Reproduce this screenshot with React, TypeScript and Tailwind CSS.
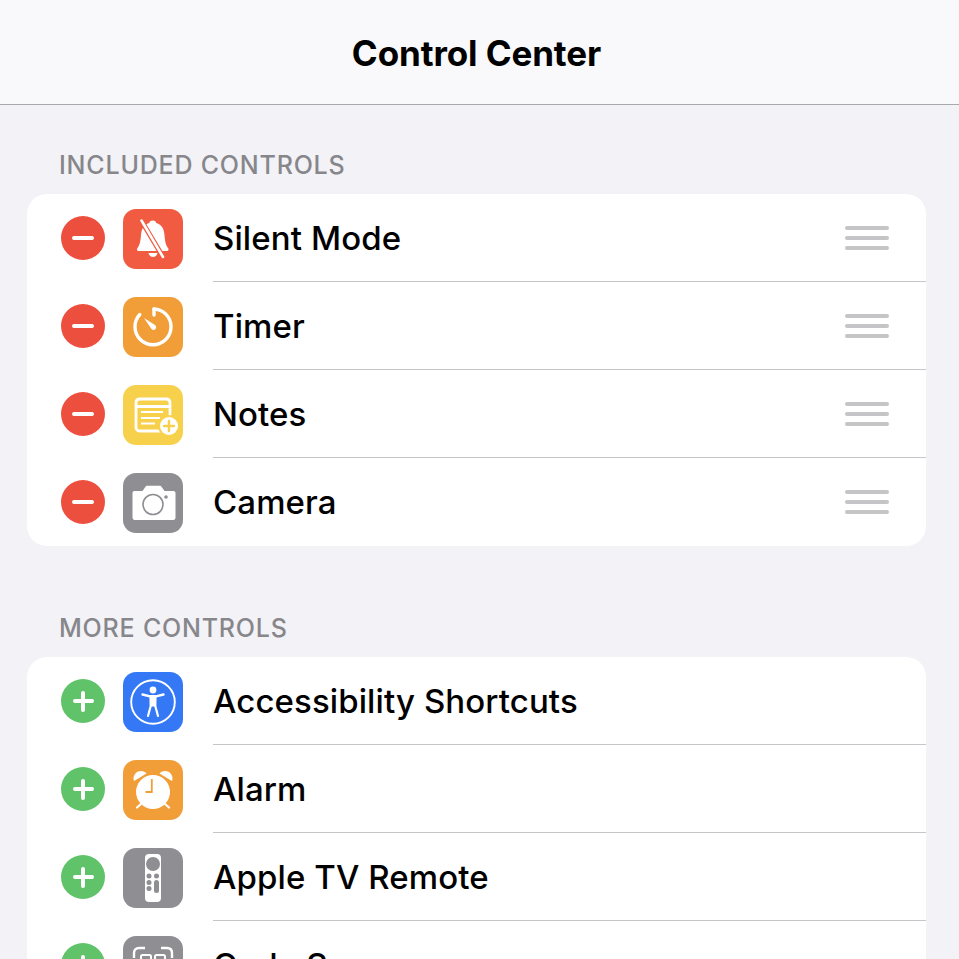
import type { ReactNode } from 'react';

const white = '#ffffff';

const BellIcon = () => (
  <svg viewBox="0 0 60 60" className="h-[60px] w-[60px]">
    <path d="M30 11.500c2 0 3 1 3.200 2.500c5.800 1.700 7.800 6.200 8.300 12c.5 6 1 9.500 3.500 13c1 1.500 .5 3-1 3H15.500c-1.500 0-2-1.500-1-3c2.500-3.500 3-7 3.500-13c.5-5.800 2.500-10.300 8.300-12c.2-1.500 1.200-2.500 3.700-2.500z" fill={white} />
    <path d="M25.500 44c.5 2.800 2.500 4 4.500 4s4-1.200 4.500-4z" fill={white} />
    <path d="M18 11l22 37" stroke="#f05b41" strokeWidth="5" />
    <path d="M18.500 11.500l21.500 36.500" stroke={white} strokeWidth="2.600" strokeLinecap="round" />
  </svg>
);

const TimerIcon = () => (
  <svg viewBox="0 0 60 60" className="h-[60px] w-[60px]" fill="none">
    <path d="M31 12c9.500 .4 17 8.200 17 17.700c0 10-8.100 18-18 18s-18-8-18-18c0-4.700 1.800-9 4.800-12.200" stroke={white} strokeWidth="3.400" strokeLinecap="round" />
    <path d="M31 12v6" stroke={white} strokeWidth="3.400" strokeLinecap="round" />
    <path d="M21 21l11 7c1.500 1.200 1.500 3 .3 4.200c-1.200 1.200-3 1-4-.5z" fill={white} />
  </svg>
);

const NotesIcon = () => (
  <svg viewBox="0 0 60 60" className="h-[60px] w-[60px]" fill="none">
    <path d="M38 46H17c-2.500 0-4-1.500-4-4V18c0-2.500 1.500-4 4-4h26c2.500 0 4 1.500 4 4v14" stroke={white} strokeWidth="2.800" />
    <path d="M13 21.500h34" stroke={white} strokeWidth="2.800" />
    <path d="M18 27h22M18 33h19M18 38.500h14" stroke={white} strokeWidth="2" />
    <circle cx="46" cy="41" r="11" fill="#f8d14c" />
    <circle cx="46" cy="41" r="9" fill={white} />
    <path d="M46 36v10M41 41h10" stroke="#f8d14c" strokeWidth="2.400" strokeLinecap="round" />
  </svg>
);

const CameraIcon = () => (
  <svg viewBox="0 0 60 60" className="h-[60px] w-[60px]">
    <path d="M10.500 18h9l3-4.200c.5-.7 1-1 2-1h12c1 0 1.500 .3 2 1l3 4.200h9c1.500 0 2 1 2 2v24.500c0 1.500-1 2.500-2 2.500h-39c-1 0-2-1-2-2.500V20c0-1 .5-2 2-2z" fill={white} />
    <circle cx="30" cy="31.500" r="10" fill="none" stroke="#8e8e93" strokeWidth="1.600" />
    <circle cx="43" cy="24" r="1.800" fill="#8e8e93" />
  </svg>
);

const AccessibilityIcon = () => (
  <svg viewBox="0 0 60 60" className="h-[60px] w-[60px]" fill="none">
    <circle cx="30" cy="30" r="21.800" stroke={white} strokeWidth="1.900" />
    <circle cx="30" cy="18" r="3.400" fill={white} />
    <path d="M19.500 22.500l7.500 1.800h6l7.500-1.800" stroke={white} strokeWidth="2.400" strokeLinecap="round" strokeLinejoin="round" />
    <path d="M27.500 24l.2 10l-2.700 10M32.500 24l-.2 10l2.700 10" stroke={white} strokeWidth="2.200" strokeLinecap="round" strokeLinejoin="round" />
    <path d="M27.500 24h5v10.500h-5z" fill={white} />
  </svg>
);

const AlarmIcon = () => (
  <svg viewBox="0 0 60 60" className="h-[60px] w-[60px]" fill="none">
    <circle cx="30" cy="32" r="17" fill={white} />
    <path d="M11 21c-2-5 2-10 7-10c2.500 0 4.500 1 5.500 2.500z" fill={white} />
    <path d="M49 21c2-5-2-10-7-10c-2.500 0-4.500 1-5.500 2.500z" fill={white} />
    <path d="M18 44l-4 3.500M42 44l4 3.500" stroke={white} strokeWidth="2.200" strokeLinecap="round" />
    <path d="M28.800 19v13h-6.300" stroke="#f19e38" strokeWidth="1.800" />
  </svg>
);

const RemoteIcon = () => (
  <svg viewBox="0 0 60 60" className="h-[60px] w-[60px]">
    <rect x="22" y="6" width="16" height="48" rx="4" fill={white} />
    <circle cx="30" cy="16" r="7" fill="#8e8e93" />
    <circle cx="26" cy="28" r="2.500" fill="#8e8e93" />
    <circle cx="33.500" cy="28" r="2.500" fill="#8e8e93" />
    <circle cx="26" cy="34.500" r="2.500" fill="#8e8e93" />
    <circle cx="26" cy="40.500" r="2.500" fill="#8e8e93" />
    <rect x="31" y="32" width="5" height="13" rx="2.500" fill="#8e8e93" />
  </svg>
);

const ScannerIcon = () => (
  <svg viewBox="0 0 60 60" className="h-[60px] w-[60px]" fill="none">
    <path d="M11 22v-5c0-3 2-5 5-5h6M38 12h6c3 0 5 2 5 5v5M11 38v5c0 3 2 5 5 5h6M38 48h6c3 0 5-2 5-5v-5" stroke={white} strokeWidth="2.400" />
    <rect x="18" y="19" width="10" height="9" rx="1.500" stroke={white} strokeWidth="2" />
    <rect x="32" y="19" width="10" height="9" rx="1.500" stroke={white} strokeWidth="2" />
    <path d="M10 30h40" stroke={white} strokeWidth="2.400" />
  </svg>
);

const MinusBadge = () => (
  <div className="flex h-[44px] w-[44px] shrink-0 items-center justify-center rounded-full bg-[#ed4f3f]">
    <div className="h-[4px] w-[22px] rounded-full bg-white" />
  </div>
);

const PlusBadge = () => (
  <div className="relative flex h-[44px] w-[44px] shrink-0 items-center justify-center rounded-full bg-[#60c36a]">
    <div className="h-[4px] w-[21px] rounded-full bg-white" />
    <div className="absolute h-[21px] w-[4px] rounded-full bg-white" />
  </div>
);

const DragHandle = () => (
  <div className="flex w-[44px] flex-col gap-[6px]">
    <div className="h-[4px] rounded-full bg-[#c5c5c7]" />
    <div className="h-[4px] rounded-full bg-[#c5c5c7]" />
    <div className="h-[4px] rounded-full bg-[#c5c5c7]" />
  </div>
);

type Control = { label: string; color: string; icon: ReactNode };

const included: Control[] = [
  { label: 'Silent Mode', color: 'bg-[#f05b41]', icon: <BellIcon /> },
  { label: 'Timer', color: 'bg-[#f19e38]', icon: <TimerIcon /> },
  { label: 'Notes', color: 'bg-[#f8d14c]', icon: <NotesIcon /> },
  { label: 'Camera', color: 'bg-[#8e8e93]', icon: <CameraIcon /> },
];

const more: Control[] = [
  { label: 'Accessibility Shortcuts', color: 'bg-[#3478f6]', icon: <AccessibilityIcon /> },
  { label: 'Alarm', color: 'bg-[#f19e38]', icon: <AlarmIcon /> },
  { label: 'Apple TV Remote', color: 'bg-[#8e8e93]', icon: <RemoteIcon /> },
  { label: 'Code Scanner', color: 'bg-[#8e8e93]', icon: <ScannerIcon /> },
];

function Row({ control, kind, last }: { control: Control; kind: 'add' | 'remove'; last: boolean }) {
  return (
    <div className="flex h-[88px] items-center pl-[34px]">
      {kind === 'remove' ? <MinusBadge /> : <PlusBadge />}
      <div className={`mt-[2px] ml-[18px] flex h-[60px] w-[60px] shrink-0 items-center justify-center overflow-hidden rounded-[13px] ${control.color}`}>
        {control.icon}
      </div>
      <div className={`ml-[30px] flex h-full flex-1 items-center pr-[37px] ${last ? '' : 'border-b border-[#c6c6c8]'}`}>
        <span className="flex-1 pt-[2px] text-[33px] font-medium tracking-[0.1px] text-black">{control.label}</span>
        {kind === 'remove' && <DragHandle />}
      </div>
    </div>
  );
}

function Section({ title, items, kind }: { title: string; items: Control[]; kind: 'add' | 'remove' }) {
  return (
    <section>
      <h2 className="pl-[59px] text-[25px] leading-[30px] font-medium tracking-[0.8px] text-[#86868b]">{title}</h2>
      <div className="mt-[14px] mr-[33px] ml-[27px] rounded-[20px] bg-white">
        {items.map((item, i) => (
          <Row key={item.label} control={item} kind={kind} last={kind === 'remove' && i === items.length - 1} />
        ))}
      </div>
    </section>
  );
}

export default function App() {
  return (
    <div className="h-[959px] w-[959px] overflow-hidden bg-[#f2f2f7] font-['Inter',sans-serif]">
      <header className="flex h-[105px] items-center justify-center border-b border-[#a9a9ab] bg-[#f9f9fb] pt-[3px] pr-[6px]">
        <h1 className="text-[35px] font-bold tracking-[-0.1px] text-black">Control Center</h1>
      </header>
      <div className="flex flex-col gap-[67px] pt-[45px]">
        <Section title="INCLUDED CONTROLS" items={included} kind="remove" />
        <Section title="MORE CONTROLS" items={more} kind="add" />
      </div>
    </div>
  );
}
